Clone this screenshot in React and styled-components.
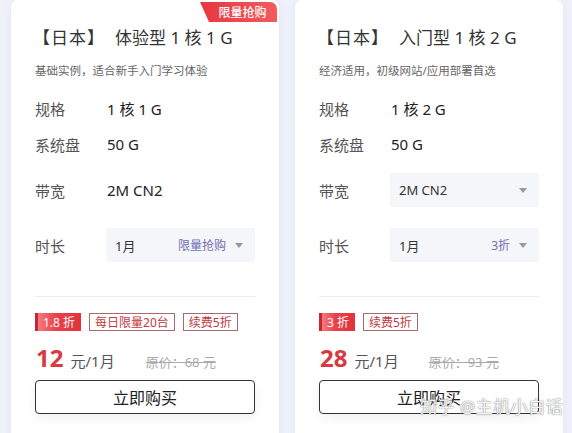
import React from "react";
import styled, { createGlobalStyle } from "styled-components";

const GlobalStyle = createGlobalStyle`
  html, body {
    margin: 0;
    padding: 0;
    background: #f0f0fa;
    overflow: hidden;
  }
  body {
    font-family: "Noto Sans", "Noto Sans CJK SC", sans-serif;
    color: #333;
  }
`;

const Page = styled.div`
  position: relative;
  display: flex;
  gap: 16px;
  padding-left: 11px;
  height: 433px;
  overflow: hidden;
`;

const Card = styled.div`
  position: relative;
  width: 268px;
  height: 470px;
  box-sizing: border-box;
  padding: 26px 24px 0 24px;
  background: #fff;
  border-radius: 7px;
  box-shadow: 0 2px 8px rgba(120, 120, 180, 0.08);
`;

const Ribbon = styled.div`
  position: absolute;
  top: 2px;
  right: 2px;
  width: 77px;
  height: 20px;
  display: flex;
  align-items: center;
  justify-content: center;
  padding-left: 8px;
  box-sizing: border-box;
  color: #fff;
  font-size: 12px;
  font-weight: 500;
  background: linear-gradient(90deg, #e6363f, #f25b5f);
  border-top-right-radius: 7px;
  clip-path: polygon(0 0, 100% 0, 100% 100%, 9px 100%);
`;

const Title = styled.div`
  font-size: 17px;
  line-height: 24px;
  color: #333;
  margin-left: -2px;
  white-space: nowrap;
`;

const Region = styled.span`
  margin-right: 10px;
  letter-spacing: 1px;
`;

const Subtitle = styled.div`
  margin-top: 13px;
  font-size: 11.5px;
  line-height: 16px;
  color: #666;
  white-space: nowrap;
`;

const Specs = styled.div`
  margin-top: 11px;
  display: flex;
  flex-direction: column;
`;

const Row = styled.div`
  display: flex;
  align-items: center;
  height: ${(p) => p.$h}px;
  margin-top: ${(p) => p.$mt || 0}px;
`;

const Label = styled.div`
  width: 72px;
  flex-shrink: 0;
  font-size: 15px;
  color: #555;
`;

const Value = styled.div`
  font-size: 15px;
  color: #222;
`;

const Select = styled.div`
  flex: 1;
  height: 34px;
  margin-left: -1px;
  display: flex;
  align-items: center;
  padding: 0 10px 0 9px;
  background: #f5f6fa;
  border-radius: 2px;
  font-size: 13px;
  color: #333;
`;

const SelectText = styled.span`
  flex: 1;
`;

const SelectHint = styled.span`
  font-size: 12px;
  color: #6f6fb4;
  margin-right: 9px;
`;

const Caret = styled.span`
  width: 0;
  height: 0;
  border-left: 4px solid transparent;
  border-right: 4px solid transparent;
  border-top: 5px solid #999;
  margin-right: 2px;
`;

const Divider = styled.div`
  margin-top: 34px;
  height: 1px;
  background: #ececf0;
`;

const Tags = styled.div`
  margin-top: 16px;
  display: flex;
  gap: 8px;
  height: 18px;
`;

const DiscountTag = styled.div`
  display: flex;
  align-items: center;
  padding: 0 6px 0 8px;
  font-size: 12px;
  color: #fff;
  background: linear-gradient(90deg, #c9262f 0 3px, #f27b80 3px, #e9424b 45%, #e2323b 100%);
`;

const OutlineTag = styled.div`
  display: flex;
  align-items: center;
  padding: 0 5px;
  box-sizing: border-box;
  border: 1px solid #a86a6a;
  font-size: 12px;
  color: #c0393f;
`;

const PriceLine = styled.div`
  margin-top: 10px;
  height: 28px;
  display: flex;
  align-items: baseline;
`;

const Price = styled.span`
  font-size: 24px;
  font-weight: 700;
  color: #d93a40;
  margin-left: 1px;
`;

const Unit = styled.span`
  font-size: 15px;
  color: #555;
  margin-left: 7px;
`;

const Original = styled.span`
  font-size: 13px;
  color: #aaa;
  text-decoration: line-through;
  margin-left: ${(p) => p.$ml}px;
`;

const BuyButton = styled.button`
  margin-top: 11px;
  width: 100%;
  height: 34px;
  box-sizing: border-box;
  border: 1px solid #333;
  border-radius: 4px;
  background: #fff;
  font-family: inherit;
  font-size: 16px;
  color: #222;
  box-shadow: 0 4px 12px rgba(0, 0, 0, 0.06);
`;

const Watermark = styled.div`
  position: absolute;
  left: 420px;
  top: 393px;
  font-size: 17px;
  color: rgba(255, 255, 255, 0.92);
  letter-spacing: 0.5px;
  text-shadow: 0 0 1px #888, 0 0 2px rgba(0, 0, 0, 0.35);
  white-space: nowrap;
  pointer-events: none;
`;

const plans = [
  {
    ribbon: "限量抢购",
    name: "体验型 1 核 1 G",
    desc: "基础实例，适合新手入门学习体验",
    spec: "1 核 1 G",
    bandSelect: false,
    hint: "限量抢购",
    discount: "1.8 折",
    tags: ["每日限量20台", "续费5折"],
    price: "12",
    original: "原价：68 元",
    originalGap: 31,
  },
  {
    name: "入门型 1 核 2 G",
    desc: "经济适用，初级网站/应用部署首选",
    spec: "1 核 2 G",
    bandSelect: true,
    hint: "3折",
    discount: "3 折",
    tags: ["续费5折"],
    price: "28",
    original: "原价：93 元",
    originalGap: 30,
  },
];

const PlanCard = ({ plan }) => (
  <Card>
    {plan.ribbon && <Ribbon>{plan.ribbon}</Ribbon>}
    <Title>
      <Region>【日本】</Region>
      {plan.name}
    </Title>
    <Subtitle>{plan.desc}</Subtitle>
    <Specs>
      <Row $h={36}>
        <Label>规格</Label>
        <Value>{plan.spec}</Value>
      </Row>
      <Row $h={36}>
        <Label>系统盘</Label>
        <Value>50 G</Value>
      </Row>
      <Row $h={34} $mt={11}>
        <Label>带宽</Label>
        {plan.bandSelect ? (
          <Select>
            <SelectText>2M CN2</SelectText>
            <Caret />
          </Select>
        ) : (
          <Value>2M CN2</Value>
        )}
      </Row>
      <Row $h={34} $mt={21}>
        <Label>时长</Label>
        <Select>
          <SelectText>1月</SelectText>
          <SelectHint>{plan.hint}</SelectHint>
          <Caret />
        </Select>
      </Row>
    </Specs>
    <Divider />
    <Tags>
      <DiscountTag>{plan.discount}</DiscountTag>
      {plan.tags.map((t) => (
        <OutlineTag key={t}>{t}</OutlineTag>
      ))}
    </Tags>
    <PriceLine>
      <Price>{plan.price}</Price>
      <Unit>元/1月</Unit>
      <Original $ml={plan.originalGap}>{plan.original}</Original>
    </PriceLine>
    <BuyButton>立即购买</BuyButton>
  </Card>
);

export default function App() {
  return (
    <>
      <GlobalStyle />
      <Page>
        {plans.map((p) => (
          <PlanCard key={p.name} plan={p} />
        ))}
        <Watermark>知乎 @主机小白话</Watermark>
      </Page>
    </>
  );
}
